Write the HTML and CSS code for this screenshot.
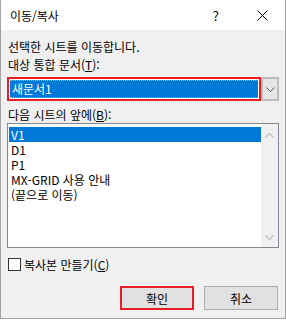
FILE: index.html
```html
<!DOCTYPE html>
<html lang="ko">
<head>
    <meta charset="UTF-8">
    <meta name="viewport" content="width=device-width, initial-scale=1.0">
    <title>이동/복사</title>
    <link rel="stylesheet" href="styles.css">
</head>
<body>
    <div class="dialogo">
        <div class="barra-titulo">
            <span class="titulo">이동/복사</span>
            <span class="ayuda">?</span>
            <svg class="cerrar" width="11" height="11" viewBox="0 0 11 11">
                <path d="M0.5 0.5 L10.5 10.5 M10.5 0.5 L0.5 10.5" stroke="#000" stroke-width="1" fill="none"/>
            </svg>
        </div>

        <div class="contenido">
            <div class="linea primera">선택한 시트를 이동합니다.</div>
            <div class="linea">대상 통합 문서(<u>T</u>):</div>

            <div class="combo">
                <div class="combo-campo">
                    <div class="combo-valor">새문서1</div>
                </div>
                <div class="combo-boton">
                    <svg width="9" height="5" viewBox="0 0 9 5">
                        <path d="M0.5 0.5 L4.5 4.5 L8.5 0.5" stroke="#555" stroke-width="1" fill="none"/>
                    </svg>
                </div>
            </div>

            <div class="linea etiqueta-lista">다음 시트의 앞에(<u>B</u>):</div>

            <div class="lista">
                <div class="items">
                    <div class="item activo">V1</div>
                    <div class="item">D1</div>
                    <div class="item">P1</div>
                    <div class="item">MX-GRID 사용 안내</div>
                    <div class="item">(끝으로 이동)</div>
                </div>
                <div class="scroll">
                    <svg width="9" height="5" viewBox="0 0 9 5">
                        <path d="M0.5 4.5 L4.5 0.5 L8.5 4.5" stroke="#c2c2c2" stroke-width="1.4" fill="none"/>
                    </svg>
                    <svg width="9" height="5" viewBox="0 0 9 5">
                        <path d="M0.5 0.5 L4.5 4.5 L8.5 0.5" stroke="#c2c2c2" stroke-width="1.4" fill="none"/>
                    </svg>
                </div>
            </div>

            <label class="copia">
                <span class="casilla"></span>
                <span>복사본 만들기(<u>C</u>)</span>
            </label>

            <div class="botones">
                <button class="boton marcado">확인</button>
                <button class="boton">취소</button>
            </div>
        </div>
    </div>
</body>
</html>
```

FILE: styles.css
```css
body {
    margin: 0;
    background: #fff;
    font-family: "Noto Sans CJK KR", "Noto Sans", sans-serif;
    font-size: 12px;
    color: #000;
}

.dialogo {
    width: 286px;
    height: 319px;
    box-sizing: border-box;
    border: 1px solid #a3a3a3;
    border-top: none;
    background: #f0f0f0;
    display: flex;
    flex-direction: column;
}

/* barra de titulo */
.barra-titulo {
    height: 30px;
    background: #fff;
    display: flex;
    align-items: center;
    padding-left: 9px;
}

.titulo {
    flex: 1;
    font-size: 12px;
}

.ayuda {
    font-size: 13px;
    margin-right: 38px;
}

.cerrar {
    margin-right: 17px;
}

.contenido {
    padding: 0 6px 0 6px;
    display: flex;
    flex-direction: column;
}

.linea {
    line-height: 18px;
    padding-left: 1px;
    white-space: nowrap;
}

.linea.primera {
    margin-top: 8px;
}

/* combo */
.combo {
    display: flex;
    margin-top: 3px;
    height: 24px;
}

.combo-campo {
    width: 254px;
    box-sizing: border-box;
    border: 2px solid #e81e25;
    background: #fff;
    padding: 1px;
}

.combo-valor {
    height: 100%;
    box-sizing: border-box;
    background: #0078d7;
    color: #fff;
    border-top: 1px dotted #e7a45a;
    border-bottom: 1px dotted #e7a45a;
    line-height: 16px;
    padding-left: 2px;
}

.combo-boton {
    width: 18px;
    box-sizing: border-box;
    border: 2px solid #bcbcbc;
    background: #e6e6e6;
    display: flex;
    align-items: center;
    justify-content: center;
}

.etiqueta-lista {
    margin-top: 5px;
    line-height: 17px;
}

/* lista */
.lista {
    width: 272px;
    height: 125px;
    box-sizing: border-box;
    border: 1px solid #828790;
    background: #fff;
    display: flex;
}

.items {
    flex: 1;
    padding: 3px 0 0 1px;
}

.item {
    line-height: 15px;
    padding-left: 2px;
    white-space: nowrap;
}

.item.activo {
    background: #0078d7;
    color: #fff;
}

.scroll {
    width: 17px;
    background: #f0f0f0;
    display: flex;
    flex-direction: column;
    align-items: center;
    justify-content: space-between;
    padding: 9px 0 7px;
}

/* casilla */
.copia {
    display: flex;
    align-items: center;
    gap: 3px;
    margin-top: 8px;
    padding-left: 1px;
    height: 16px;
}

.casilla {
    width: 13px;
    height: 13px;
    box-sizing: border-box;
    border: 1px solid #333;
    background: #fff;
}

/* botones */
.botones {
    display: flex;
    justify-content: flex-end;
    gap: 10px;
    margin-top: 14px;
    padding-right: 1px;
}

.boton {
    width: 74px;
    height: 24px;
    box-sizing: border-box;
    border: 1px solid #adadad;
    background: #e1e1e1;
    font-family: inherit;
    font-size: 12px;
    color: #000;
    padding: 0;
}

.boton.marcado {
    border: 2px solid #e81e25;
}
```
